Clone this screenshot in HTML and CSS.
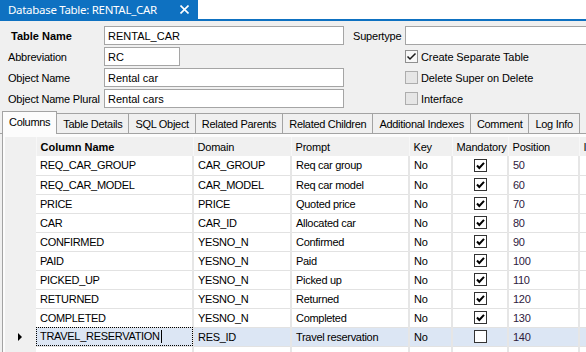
FILE: index.html
```html
<!DOCTYPE html>
<html lang="en">
  <head>
    <meta charset="UTF-8" />
    <title>Database Table: RENTAL_CAR</title>
    <link rel="stylesheet" href="styles.css">
  </head>
  <body>
    <!-- Document tab strip -->
    <header class="doc-tabs">
      <div class="doc-tab">
        <span>Database Table: RENTAL_CAR</span>
        <svg class="close" width="9" height="9" viewBox="0 0 9 9">
          <path d="M0.5 0.5 L8.5 8.5 M8.5 0.5 L0.5 8.5" stroke="#fff" stroke-width="1.6" />
        </svg>
      </div>
    </header>

    <!-- Table properties -->
    <form class="props">
      <label class="lbl lbl-strong">Table Name</label>
      <input class="field" type="text" value="RENTAL_CAR" />
      <label class="lbl lbl-side">Supertype</label>
      <input class="field field-wide" type="text" value="" />

      <label class="lbl">Abbreviation</label>
      <input class="field field-short" type="text" value="RC" />
      <span></span>
      <label class="check">
        <span class="box box-on">
          <svg width="11" height="11" viewBox="0 0 11 11">
            <path d="M1.5 5.5 L4 8 L9.5 2.5" fill="none" stroke="#1a1a1a" stroke-width="1.5" />
          </svg>
        </span>
        Create Separate Table
      </label>

      <label class="lbl">Object Name</label>
      <input class="field" type="text" value="Rental car" />
      <span></span>
      <label class="check"><span class="box"></span>Delete Super on Delete</label>

      <label class="lbl">Object Name Plural</label>
      <input class="field" type="text" value="Rental cars" />
      <span></span>
      <label class="check"><span class="box"></span>Interface</label>
    </form>

    <!-- Detail tabs -->
    <nav class="tabs">
      <span class="tab tab-active">Columns</span>
      <span class="tab">Table Details</span>
      <span class="tab">SQL Object</span>
      <span class="tab">Related Parents</span>
      <span class="tab">Related Children</span>
      <span class="tab">Additional Indexes</span>
      <span class="tab">Comment</span>
      <span class="tab">Log Info</span>
    </nav>

    <main class="tab-page">
      <table class="grid">
        <colgroup>
          <col class="c-rh" />
          <col class="c-name" />
          <col class="c-domain" />
          <col class="c-prompt" />
          <col class="c-key" />
          <col class="c-mand" />
          <col class="c-pos" />
          <col class="c-more" />
        </colgroup>
        <thead>
          <tr>
            <th></th>
            <th class="th-strong">Column Name</th>
            <th>Domain</th>
            <th>Prompt</th>
            <th>Key</th>
            <th>Mandatory</th>
            <th>Position</th>
            <th>I</th>
          </tr>
        </thead>
        <tbody id="rows"></tbody>
      </table>
    </main>

    <script>
      // Column rows of the RENTAL_CAR table
      const columns = [
        ["REQ_CAR_GROUP", "CAR_GROUP", "Req car group", true, 50],
        ["REQ_CAR_MODEL", "CAR_MODEL", "Req car model", true, 60],
        ["PRICE", "PRICE", "Quoted price", true, 70],
        ["CAR", "CAR_ID", "Allocated car", true, 80],
        ["CONFIRMED", "YESNO_N", "Confirmed", true, 90],
        ["PAID", "YESNO_N", "Paid", true, 100],
        ["PICKED_UP", "YESNO_N", "Picked up", true, 110],
        ["RETURNED", "YESNO_N", "Returned", true, 120],
        ["COMPLETED", "YESNO_N", "Completed", true, 130],
        ["TRAVEL_RESERVATION", "RES_ID", "Travel reservation", false, 140]
      ];

      const tick =
        '<svg width="11" height="11" viewBox="0 0 11 11">' +
        '<path d="M2 5.5 L4.3 8 L9 2.8" fill="none" stroke="#000" stroke-width="2" /></svg>';

      const body = document.getElementById("rows");
      columns.forEach(function (col, i) {
        const current = i === columns.length - 1;
        const tr = document.createElement("tr");
        if (current) tr.className = "row-current";
        tr.innerHTML =
          '<td class="rh">' + (current ? '<span class="arrow"></span>' : "") + "</td>" +
          '<td class="' + (current ? "focus" : "") + '">' + col[0] +
          (current ? '<span class="caret"></span>' : "") + "</td>" +
          "<td>" + col[1] + "</td>" +
          "<td>" + col[2] + "</td>" +
          "<td>No</td>" +
          '<td class="mid"><span class="cell-box">' + (col[3] ? tick : "") + "</span></td>" +
          '<td class="pos">' + col[4] + "</td>" +
          "<td></td>";
        body.appendChild(tr);
      });

      // empty new-row line at the bottom
      const blank = document.createElement("tr");
      blank.innerHTML = '<td class="rh"></td><td></td><td></td><td></td><td></td><td></td><td></td><td></td>';
      body.appendChild(blank);
    </script>
  </body>
</html>
```

FILE: styles.css
```css
/* General */
* {
  box-sizing: border-box;
  margin: 0;
  padding: 0;
}

body {
  width: 586px;
  height: 352px;
  overflow: hidden;
  font-family: "Liberation Sans", Arial, sans-serif;
  font-size: 11px;
  color: #000;
  background-color: #f0f0f0;
}

/* Document tab */
.doc-tabs {
  display: flex;
  height: 21px;
  background: #fff;
  border-bottom: 2px solid #0e71c1;
}

.doc-tab {
  display: flex;
  align-items: center;
  justify-content: space-between;
  width: 198px;
  height: 19px;
  padding: 0 9px 0 8px;
  background: #0e71c1;
  color: #fff;
  font-family: "Noto Sans", sans-serif;
  font-size: 11.5px;
  letter-spacing: -0.3px;
}

/* Properties form */
.props {
  display: grid;
  grid-template-columns: 96px 240px 61px 1fr;
  grid-auto-rows: 21px;
  align-items: center;
  padding: 4px 0 0 8px;
  overflow: hidden;
}

.lbl {
  white-space: nowrap;
  letter-spacing: -0.2px;
}

.lbl-strong {
  font-weight: bold;
  padding-left: 3px;
  letter-spacing: 0;
}

.lbl-side {
  padding-left: 9px;
}

.field {
  height: 19px;
  width: 100%;
  padding: 0 3px;
  border: 1px solid #a5a5a5;
  background: #fff;
  font-family: inherit;
  font-size: 11px;
  color: #000;
  outline: none;
}

.field-short {
  width: 76px;
}

.field-wide {
  width: calc(100% + 6px);
}

.check {
  display: flex;
  align-items: center;
  gap: 3px;
  white-space: nowrap;
  letter-spacing: -0.1px;
}

.box {
  display: flex;
  align-items: center;
  justify-content: center;
  width: 13px;
  height: 13px;
  border: 1px solid #adadad;
  background: #e6e6e6;
}

.box-on {
  background: #f7f7f7;
  border-color: #8f8f8f;
}

/* Detail tabs */
.tabs {
  display: flex;
  align-items: flex-end;
  height: 25px;
  padding-left: 2px;
  border-bottom: 1px solid #a3a3a3;
}

.tab {
  display: flex;
  align-items: center;
  height: 20px;
  padding: 0 6px;
  margin-left: -1px;
  border: 1px solid #a3a3a3;
  border-bottom: none;
  background: #f0f0f0;
  white-space: nowrap;
  letter-spacing: -0.3px;
}

.tab-active {
  height: 23px;
  margin-left: 0;
  margin-bottom: -1px;
  padding-bottom: 2px;
  background: #fcfcfc;
}

.tab-page {
  height: 230px;
  margin-left: 2px;
  padding: 3px 0 0 2px;
  border-left: 1px solid #a3a3a3;
  background: #fcfcfc;
  overflow: hidden;
}

/* Data grid */
.grid {
  table-layout: fixed;
  width: 634px;
  border-collapse: collapse;
  background: #fff;
}

.c-rh { width: 31px; }
.c-name { width: 157px; }
.c-domain { width: 98px; }
.c-prompt { width: 118px; }
.c-key { width: 43px; }
.c-mand { width: 56px; }
.c-pos { width: 71px; }
.c-more { width: 60px; }

.grid th {
  height: 19px;
  padding: 0 4px;
  background: #f0f0f0;
  font-weight: normal;
  text-align: left;
  white-space: nowrap;
  border-right: 1px solid #f7f7f7;
  letter-spacing: -0.2px;
}

.grid th.th-strong {
  font-weight: bold;
  letter-spacing: 0;
}

.grid td {
  height: 19px;
  padding: 0 4px;
  border-right: 2px solid #e6e6e6;
  border-bottom: 1px solid #e2e2e2;
  white-space: nowrap;
  overflow: hidden;
  letter-spacing: -0.3px;
}

.grid td.rh {
  position: relative;
  background: #f0f0f0;
  border-right: none;
  border-bottom: none;
}

.grid td.mid {
  text-align: center;
  padding: 0;
}

.grid td.pos {
  color: #2e1a3c;
}

.cell-box {
  display: inline-flex;
  align-items: center;
  justify-content: center;
  width: 13px;
  height: 13px;
  border: 1px solid #333;
  background: #fff;
  vertical-align: middle;
}

.row-current td {
  background: #dce6f4;
}

.grid .row-current td.rh {
  background: #f0f0f0;
}

.grid td.focus {
  outline: 1px dotted #000;
  outline-offset: -1px;
}

.caret {
  display: inline-block;
  width: 1px;
  height: 13px;
  margin-left: 1px;
  background: #000;
  vertical-align: -3px;
}

.arrow {
  position: absolute;
  left: 13px;
  top: 6px;
  border-left: 4px solid #000;
  border-top: 4px solid transparent;
  border-bottom: 4px solid transparent;
}
```
